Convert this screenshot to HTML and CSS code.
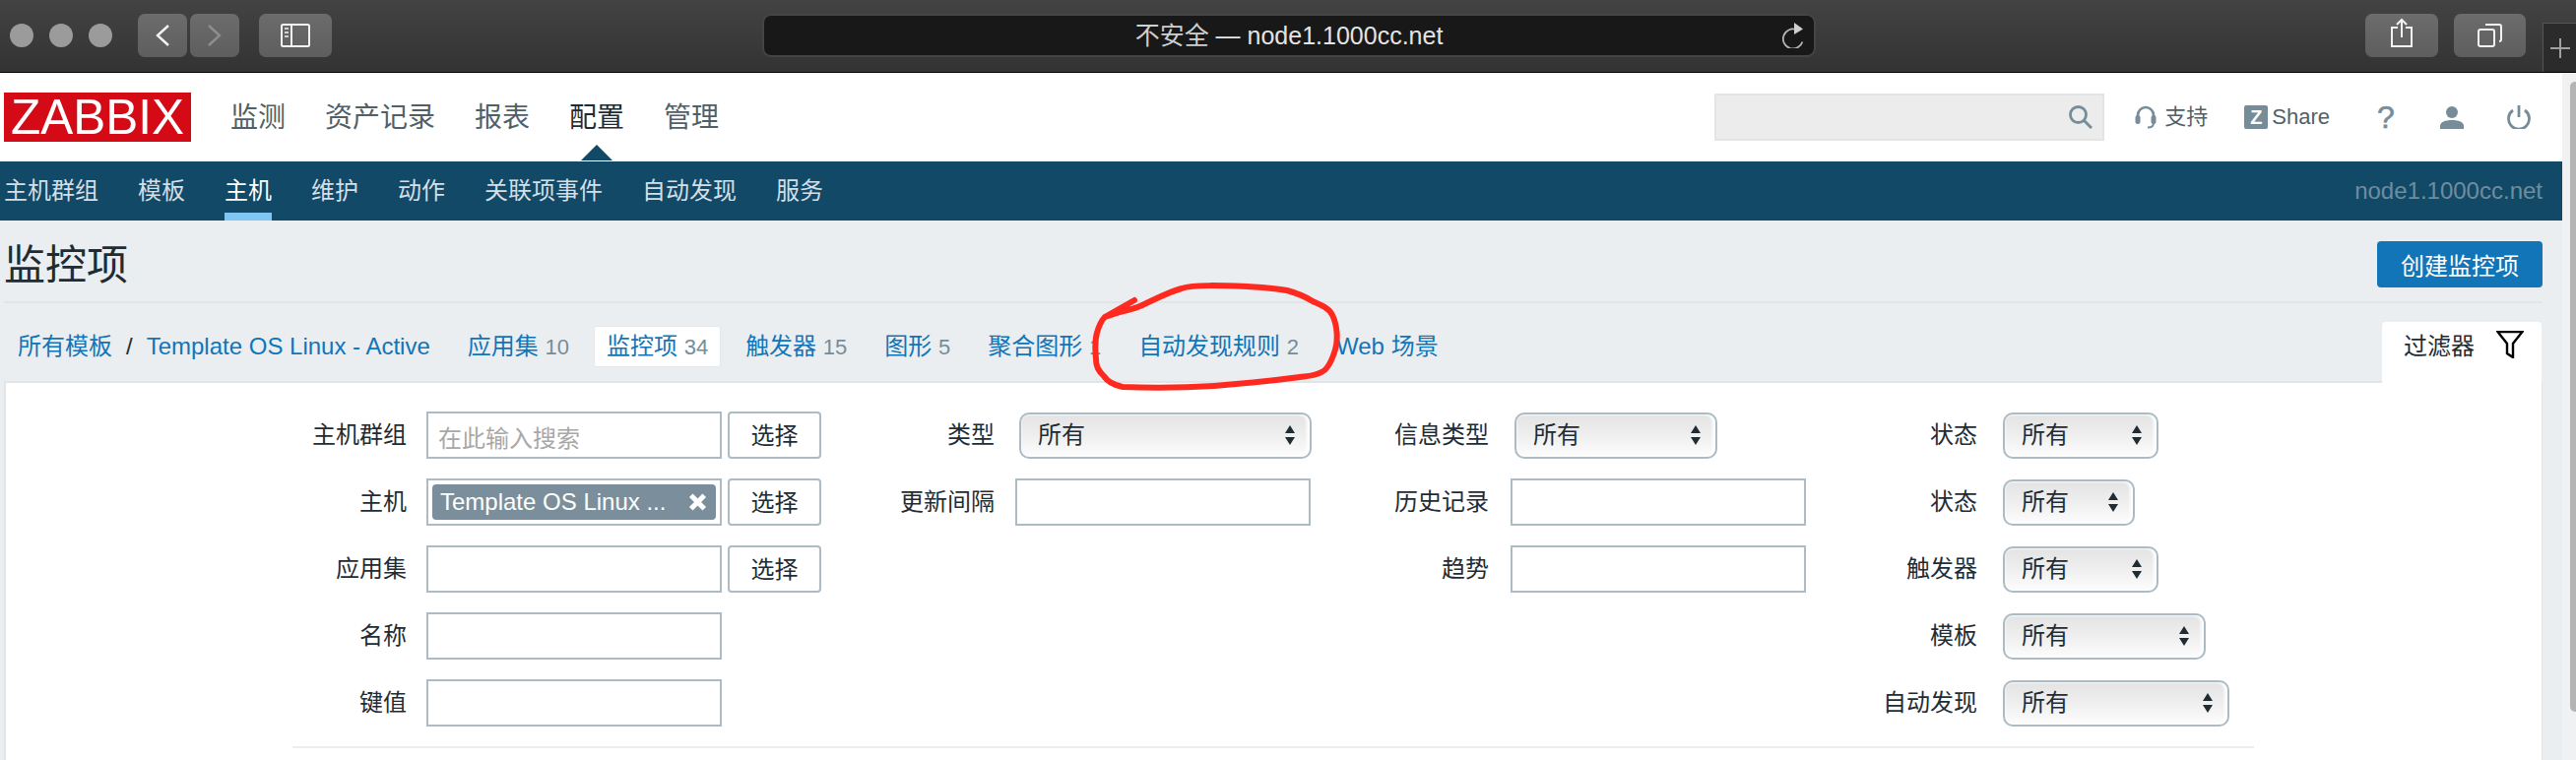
FILE: index.html
```html
<!DOCTYPE html>
<html lang="zh-CN">
<head>
<meta charset="utf-8">
<title>监控项</title>
<link rel="stylesheet" href="styles.css">
</head>
<body>
<header class="toolbar">
  <div class="lights"><span class="light"></span><span class="light"></span><span class="light"></span></div>
  <div class="histbtns">
    <button class="tbtn tbtn-hist"><svg class="ic-chev" viewBox="0 0 14 22"><path d="M13 1 2 11l11 10" fill="none" stroke="#f2f2f2" stroke-width="2.4"/></svg></button>
    <button class="tbtn tbtn-hist"><svg class="ic-chev" viewBox="0 0 14 22"><path d="m1 1 11 10L1 21" fill="none" stroke="#8e8e8e" stroke-width="2.4"/></svg></button>
  </div>
  <button class="tbtn tbtn-side"><svg class="ic-side" viewBox="0 0 30 24"><rect x="1" y="1" width="28" height="22" rx="1.5" fill="none" stroke="#f2f2f2" stroke-width="2"/><path d="M11 1v22" stroke="#f2f2f2" stroke-width="2"/><path d="M4 5h4M4 9h4M4 13h4" stroke="#cfcfcf" stroke-width="2"/></svg></button>
  <div class="urlbar">
    <span class="urltext"><span class="urlwarn">不安全</span> — node1.1000cc.net</span>
    <svg class="ic-reload" viewBox="0 0 24 26"><path d="M12 6.500A10 10 0 1 0 22 16" fill="none" stroke="#b4b4b4" stroke-width="1.800" transform="rotate(20 12 16)"/><path d="M13 0v12l9-5.500z" fill="#d0d0d0"/></svg>
  </div>
  <button class="tbtn tbtn-share"><svg class="ic-share" viewBox="0 0 22 30"><path d="M7 10H1v19h20V10h-6" fill="none" stroke="#f2f2f2" stroke-width="2"/><path d="M11 20V2M6 7l5-5 5 5" fill="none" stroke="#f2f2f2" stroke-width="2"/></svg></button>
  <button class="tbtn tbtn-tabs"><svg class="ic-tabs" viewBox="0 0 25 24"><rect x="1" y="6" width="16" height="17" rx="2" fill="none" stroke="#f2f2f2" stroke-width="2"/><path d="M8 1h14a2 2 0 0 1 2 2v13a2 2 0 0 1-2 2" fill="none" stroke="#f2f2f2" stroke-width="2"/></svg></button>
  <div class="newtab"><span class="plus"></span></div>
</header>

<div class="window">
  <div class="page">
    <div class="topnav">
      <div class="logo">ZABBIX</div>
      <nav class="mainnav">
        <a class="mainlink">监测</a>
        <a class="mainlink">资产记录</a>
        <a class="mainlink">报表</a>
        <a class="mainlink is-active">配置</a>
        <a class="mainlink">管理</a>
      </nav>
      <div class="toolset">
        <div class="search">
          <svg class="ic-search" viewBox="0 0 24 24"><circle cx="9.500" cy="9.500" r="8" fill="none" stroke="#768d99" stroke-width="2.800"/><path d="m15 15 8 8" stroke="#768d99" stroke-width="3"/></svg>
        </div>
        <a class="toollink toollink-support"><svg class="ic-headset" viewBox="0 0 22 24"><path d="M3 14V10a8 8 0 0 1 16 0v4" fill="none" stroke="#768d99" stroke-width="2.600"/><rect x="0.500" y="10" width="5" height="9" rx="2.500" fill="#768d99"/><rect x="16.500" y="10" width="5" height="9" rx="2.500" fill="#768d99"/><path d="M19 18c0 3-2 4.500-6 4.500" fill="none" stroke="#768d99" stroke-width="2"/></svg>支持</a>
        <a class="toollink toollink-share"><span class="zbadge">Z</span>Share</a>
        <a class="toolq">?</a>
        <svg class="ic-user" viewBox="0 0 24 23"><circle cx="12" cy="6" r="6" fill="#768d99"/><path d="M0 23v-3c0-4 5-6 12-6s12 2 12 6v3z" fill="#768d99"/></svg>
        <svg class="ic-power" viewBox="0 0 24 24"><path d="M6 5a10.500 10.500 0 1 0 12 0" fill="none" stroke="#768d99" stroke-width="2.800"/><path d="M12 0v12" stroke="#768d99" stroke-width="2.800"/></svg>
      </div>
    </div>

    <div class="subnav">
      <a class="sublink">主机群组</a>
      <a class="sublink">模板</a>
      <a class="sublink is-current">主机</a>
      <a class="sublink">维护</a>
      <a class="sublink">动作</a>
      <a class="sublink">关联项事件</a>
      <a class="sublink">自动发现</a>
      <a class="sublink">服务</a>
      <span class="hostname">node1.1000cc.net</span>
    </div>

    <main class="content">
      <div class="titlebar">
        <h1 class="title">监控项</h1>
        <button class="btn-create">创建监控项</button>
      </div>

      <div class="tabbar">
        <nav class="crumbs">
          <a class="crumb">所有模板</a><span class="crumbsep">/</span><a class="crumb">Template OS Linux - Active</a>
          <a class="tab tab-first">应用集 <span class="num">10</span></a>
          <a class="tab is-on">监控项 <span class="num">34</span></a>
          <a class="tab">触发器 <span class="num">15</span></a>
          <a class="tab">图形 <span class="num">5</span></a>
          <a class="tab">聚合图形 <span class="num">1</span></a>
          <a class="tab">自动发现规则 <span class="num">2</span></a>
          <a class="tab">Web 场景</a>
        </nav>
        <div class="filtertab"><span class="filtertext">过滤器</span>
          <svg class="ic-funnel" viewBox="0 0 28 28"><path d="M1.500 1h25L17 13v14l-6-4V13z" fill="none" stroke="#000" stroke-width="2.400"/></svg>
        </div>
      </div>

      <section class="panel">
        <div class="filter">
          <div class="fcol fcol-1">
            <label class="flabel">主机群组</label>
            <div class="fctl"><input class="inp" placeholder="在此输入搜索"><button class="btn-select">选择</button></div>
            <label class="flabel">主机</label>
            <div class="fctl">
              <div class="inp inp-tags"><span class="tag"><span class="tagtext">Template OS Linux ...</span><svg class="ic-x" viewBox="0 0 18 16"><path d="m3 2 12 12M15 2 3 14" stroke="#fff" stroke-width="4.500"/></svg></span></div>
              <button class="btn-select">选择</button>
            </div>
            <label class="flabel">应用集</label>
            <div class="fctl"><input class="inp"><button class="btn-select">选择</button></div>
            <label class="flabel">名称</label>
            <div class="fctl"><input class="inp"></div>
            <label class="flabel">键值</label>
            <div class="fctl"><input class="inp"></div>
          </div>

          <div class="fcol fcol-2">
            <label class="flabel">类型</label>
            <div class="fctl"><div class="sel sel-297">所有<svg class="ic-arrows" viewBox="0 0 12 24"><path d="M6 2 11 10H1zM6 22 1 14h10z" fill="#1f2c33"/></svg></div></div>
            <label class="flabel">更新间隔</label>
            <div class="fctl"><input class="inp"></div>
          </div>

          <div class="fcol fcol-3">
            <label class="flabel">信息类型</label>
            <div class="fctl"><div class="sel sel-206">所有<svg class="ic-arrows" viewBox="0 0 12 24"><path d="M6 2 11 10H1zM6 22 1 14h10z" fill="#1f2c33"/></svg></div></div>
            <label class="flabel">历史记录</label>
            <div class="fctl"><input class="inp"></div>
            <label class="flabel">趋势</label>
            <div class="fctl"><input class="inp"></div>
          </div>

          <div class="fcol fcol-4">
            <label class="flabel">状态</label>
            <div class="fctl"><div class="sel sel-158">所有<svg class="ic-arrows" viewBox="0 0 12 24"><path d="M6 2 11 10H1zM6 22 1 14h10z" fill="#1f2c33"/></svg></div></div>
            <label class="flabel">状态</label>
            <div class="fctl"><div class="sel sel-134">所有<svg class="ic-arrows" viewBox="0 0 12 24"><path d="M6 2 11 10H1zM6 22 1 14h10z" fill="#1f2c33"/></svg></div></div>
            <label class="flabel">触发器</label>
            <div class="fctl"><div class="sel sel-158">所有<svg class="ic-arrows" viewBox="0 0 12 24"><path d="M6 2 11 10H1zM6 22 1 14h10z" fill="#1f2c33"/></svg></div></div>
            <label class="flabel">模板</label>
            <div class="fctl"><div class="sel sel-206">所有<svg class="ic-arrows" viewBox="0 0 12 24"><path d="M6 2 11 10H1zM6 22 1 14h10z" fill="#1f2c33"/></svg></div></div>
            <label class="flabel">自动发现</label>
            <div class="fctl"><div class="sel sel-230">所有<svg class="ic-arrows" viewBox="0 0 12 24"><path d="M6 2 11 10H1zM6 22 1 14h10z" fill="#1f2c33"/></svg></div></div>
          </div>
        </div>
        <hr class="filterline">
      </section>
    </main>
  </div>
  <aside class="scrollbar"><span class="thumb"></span></aside>
</div>

<svg class="annotation" viewBox="0 0 2616 772"><path d="M1152 305 1122 322C1140 315 1150 315 1160 310C1175 303 1188 296 1200 293C1212 289 1240 290 1267 291C1285 292 1297 293 1307 295C1318 298 1325 301 1333 306C1342 310 1350 313 1353 320C1358 330 1359 345 1356 355C1353 365 1349 375 1342 378C1335 382 1328 382 1320 383C1290 387 1260 390 1233 392C1200 394 1165 394 1140 393C1130 391 1125 388 1121 382C1115 376 1113 372 1113 365C1112 355 1112 345 1114 338C1116 331 1118 326 1122 322" fill="none" stroke="#ff2a1f" stroke-width="6" stroke-linecap="round" stroke-linejoin="round"/></svg>
</body>
</html>
```

FILE: styles.css
```css
* { box-sizing: border-box; }
html, body { margin: 0; height: 772px; overflow: hidden; }
body {
  position: relative;
  font-family: "Liberation Sans", "Noto Sans CJK SC", sans-serif;
  font-size: 24px;
  color: #1f2c33;
  background: #ebeef1;
}
button { font-family: inherit; padding: 0; }
svg { display: block; flex: none; }

/* browser chrome */
.toolbar {
  display: flex;
  align-items: flex-start;
  height: 74px;
  padding: 14px 0 0 10px;
  background: linear-gradient(#434343, #333333);
  border-bottom: 1px solid #000;
}
.lights { display: flex; gap: 16px; padding-top: 10px; }
.light { width: 24px; height: 24px; border-radius: 50%; background: #9b9b9b; }
.histbtns { display: flex; gap: 3px; margin-left: 26px; }
.tbtn {
  display: flex;
  align-items: center;
  justify-content: center;
  height: 44px;
  border: 0;
  border-radius: 7px;
  background: linear-gradient(#6c6c6c, #5e5e5e);
}
.tbtn-hist { width: 50px; }
.tbtn-side { width: 74px; margin-left: 20px; }
.tbtn-share { width: 74px; margin-left: 558px; }
.tbtn-tabs { width: 73px; margin-left: 16px; }
.ic-chev { width: 14px; height: 22px; }
.ic-side { width: 30px; height: 24px; }
.ic-share { width: 22px; height: 30px; margin-top: -6px; }
.ic-tabs { width: 25px; height: 24px; }
.urlbar {
  position: relative;
  display: flex;
  align-items: center;
  justify-content: center;
  width: 1070px;
  height: 44px;
  margin-left: 437px;
  background: #181818;
  border: 2px solid #454545;
  border-radius: 9px;
}
.urltext { font-size: 25px; line-height: 44px; color: #e4e4e4; }
.urlwarn { color: #cfcfcf; }
.ic-reload { position: absolute; right: 9px; top: 7px; width: 24px; height: 26px; }
.newtab {
  display: flex;
  align-items: center;
  justify-content: center;
  width: 34px;
  height: 50px;
  margin: 9px 0 0 17px;
  border: 1px solid #555;
  border-width: 1px 0 0 1px;
  background: #2b2b2b;
}
.plus {
  width: 20px;
  height: 20px;
  background:
    linear-gradient(#a0a0a0, #a0a0a0) center / 100% 2px no-repeat,
    linear-gradient(#a0a0a0, #a0a0a0) center / 2px 100% no-repeat;
}

/* page frame */
.window { display: flex; height: 698px; }
.page { display: flex; flex-direction: column; width: 2602px; flex: none; }
.scrollbar { flex: 1; padding: 9px 0 0 8px; background: #eff1f3; }
.thumb { display: block; width: 10px; height: 640px; border-radius: 5px 0 0 5px; background: #b4b4b4; }

/* top navigation */
.topnav { display: flex; align-items: center; height: 90px; padding: 0 32px 0 4px; background: #fff; }
.logo {
  width: 190px;
  height: 50px;
  background: #d40b16;
  color: #fff;
  font-size: 49.500px;
  line-height: 50px;
  text-align: center;
}
.mainnav { display: flex; gap: 40px; margin-left: 40px; padding-top: 2px; }
.mainlink { position: relative; font-size: 28px; line-height: 40px; color: #515f67; }
.mainlink.is-active { color: #1f2c33; }
.mainlink.is-active::after {
  content: "";
  position: absolute;
  left: 50%;
  bottom: -23px;
  margin-left: -16px;
  border: solid transparent;
  border-width: 0 16px 16px;
  border-bottom-color: #114966;
}
.toolset { display: flex; align-items: center; margin-left: auto; color: #515f67; }
.search {
  display: flex;
  align-items: center;
  justify-content: flex-end;
  width: 396px;
  height: 48px;
  padding-right: 10px;
  background: #ececec;
  border: 2px solid #e4e4e4;
}
.ic-search { width: 24px; height: 24px; }
.toollink { display: flex; align-items: center; font-size: 22px; line-height: 30px; }
.toollink-support { gap: 8px; margin-left: 31px; }
.toollink-share { gap: 4px; margin-left: 37px; }
.ic-headset { width: 22px; height: 24px; }
.zbadge {
  width: 24px;
  height: 24px;
  border-radius: 2px;
  background: #768d99;
  color: #fff;
  font-size: 20px;
  font-weight: 700;
  line-height: 24px;
  text-align: center;
}
.toolq { width: 16px; margin-left: 48px; font-size: 32px; line-height: 30px; color: #768d99; text-align: center; -webkit-text-stroke: 0.6px #768d99; }
.ic-user { width: 24px; height: 23px; margin-left: 48px; }
.ic-power { width: 24px; height: 24px; margin-left: 44px; }

/* second navigation */
.subnav {
  display: flex;
  align-items: center;
  gap: 40px;
  height: 60px;
  padding: 0 20px 0 4px;
  background: #114966;
}
.sublink { position: relative; align-self: stretch; line-height: 60px; color: #d3dfe6; }
.sublink.is-current { color: #fff; }
.sublink.is-current::after {
  content: "";
  position: absolute;
  left: 0;
  right: 0;
  bottom: 0;
  height: 8px;
  background: #7fc6f2;
}
.hostname { margin-left: auto; color: #6f8d9f; }

/* content */
.content { display: flex; flex: 1; flex-direction: column; min-height: 0; padding: 0 20px 0 4px; }
.titlebar {
  display: flex;
  align-items: center;
  justify-content: space-between;
  height: 84px;
  padding-top: 6px;
  border-bottom: 2px solid #e1e5e8;
}
.title { margin: 4px 0 0; font-size: 42px; font-weight: 400; line-height: 56px; color: #1f2c33; }
.btn-create {
  width: 168px;
  height: 47px;
  border: 0;
  border-radius: 4px;
  background: #1275b8;
  color: #fff;
  font-size: 24px;
}
.tabbar { display: flex; align-items: flex-end; justify-content: space-between; height: 79px; }
.crumbs { display: flex; align-items: center; gap: 12px; height: 42px; margin-bottom: 14px; padding-left: 14px; }
.crumb { line-height: 42px; color: #1275b8; }
.crumbsep { margin: 0 2px; }
.tab-first { margin-left: 13px; }
.tab {
  display: block;
  height: 42px;
  padding: 0 12px;
  border: 1px solid transparent;
  border-radius: 3px;
  line-height: 40px;
  color: #1275b8;
  white-space: nowrap;
}
.tab.is-on { background: #fff; border-color: #e4e8eb; }
.num { font-size: 22px; color: #768d99; }
.filtertab {
  position: relative;
  z-index: 1;
  display: flex;
  align-items: flex-start;
  gap: 22px;
  width: 162px;
  height: 62px;
  margin: 0 1px -2px 0;
  padding: 9px 20px 0 22px;
  background: #fff;
  border-radius: 4px 4px 0 0;
  line-height: 32px;
  color: #1f2c33;
}
.filtertext { white-space: nowrap; }
.ic-funnel { width: 28px; height: 28px; flex: none; }
.panel {
  flex: 1;
  min-height: 0;
  padding: 29px 0 0 291px;
  background: #fff;
  border: 2px solid #e1e5e8;
  border-width: 2px 1px 0 2px;
  margin-right: 0;
}
.filter { display: flex; height: 340px; }
.fcol { display: grid; grid-auto-rows: 48px; row-gap: 20px; align-items: center; align-content: start; }
.fcol-1 { grid-template-columns: 116px auto; column-gap: 20px; width: 583px; }
.fcol-2 { grid-template-columns: 130px auto; column-gap: 21px; width: 502px; }
.fcol-3 { grid-template-columns: 130px auto; column-gap: 22px; width: 496px; }
.fcol-4 { grid-template-columns: 130px auto; column-gap: 22px; }
.flabel { text-align: right; line-height: 48px; color: #1f2c33; }
.fctl { display: flex; gap: 6px; }
.inp {
  display: block;
  width: 300px;
  height: 48px;
  padding: 7px 10px 0;
  background: #fff;
  border: 2px solid #acbbc4;
  border-radius: 0;
  outline: 0;
  font: inherit;
  color: inherit;
}
.inp::placeholder { color: #a8a8a8; opacity: 1; }
.inp-tags { padding: 4px; }
.tag {
  display: flex;
  align-items: center;
  justify-content: space-between;
  height: 36px;
  padding: 0 8px 0 8px;
  border-radius: 4px;
  background: #7a8f9b;
  color: #fff;
  line-height: 36px;
}
.tagtext { white-space: nowrap; }
.ic-x { width: 21px; height: 18px; }
.btn-select {
  width: 95px;
  height: 48px;
  padding-bottom: 3px;
  background: #fff;
  border: 2px solid #acbbc4;
  border-radius: 4px;
  font-size: 24px;
  color: #1f2c33;
}
.sel {
  display: flex;
  align-items: center;
  justify-content: space-between;
  height: 47px;
  margin-left: 4px;
  padding: 0 14px 0 17px;
  border: 2px solid #acbbc4;
  border-radius: 10px;
  background: linear-gradient(#e3e3e3, #f0f0f0 55%, #fdfdfd);
  box-shadow: inset 0 0 3px #fff, inset -3px 0 3px #fff;
  line-height: 44px;
}
.sel-297 { width: 297px; }
.sel-206 { width: 206px; }
.sel-158 { width: 158px; }
.sel-134 { width: 134px; }
.sel-230 { width: 230px; }
.ic-arrows { width: 12px; height: 24px; }
.filterline { height: 2px; margin: 0; margin-right: 292px; border: 0; background: #ebeef1; }

/* annotation drawn over the screenshot */
.annotation { position: absolute; left: 0; top: 0; width: 2616px; height: 772px; pointer-events: none; z-index: 5; }
```
